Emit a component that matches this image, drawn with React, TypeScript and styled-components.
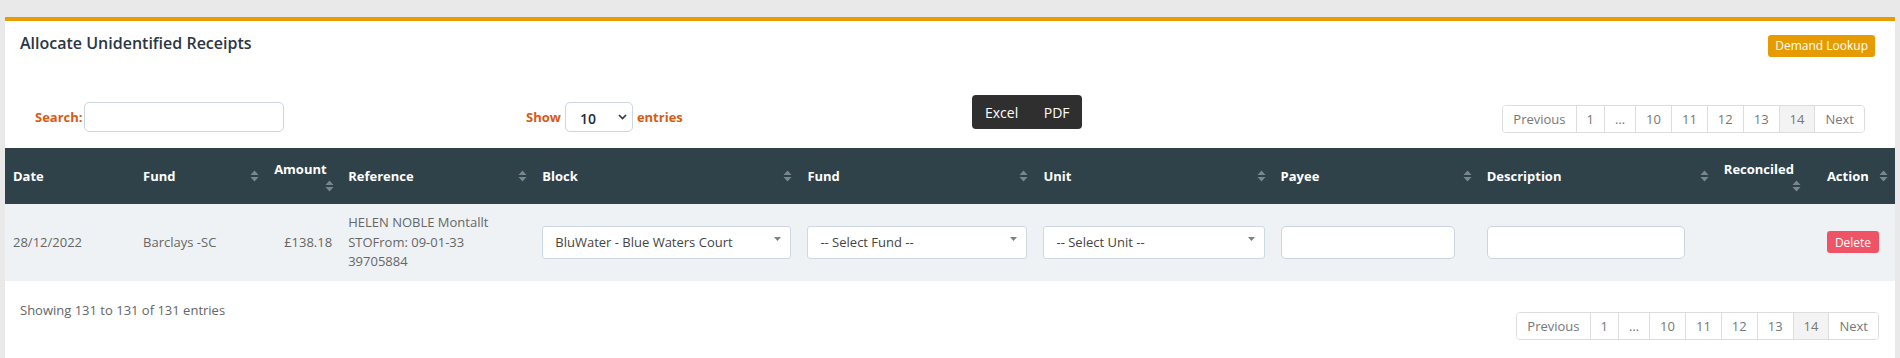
import React from "react";
import styled, { createGlobalStyle } from "styled-components";

const GlobalStyle = createGlobalStyle`
  html, body {
    margin: 0;
    padding: 0;
  }

  body {
    background: #e9e9e9;
    font-family: "Open Sans", "Liberation Sans", Arial, sans-serif;
    color: #666;
  }

  * {
    box-sizing: border-box;
  }
`;

type Column = {
  key: string;
  label: string;
  width: number;
  sortable?: boolean;
  stacked?: boolean;
};

const columns: Column[] = [
  { key: "date", label: "Date", width: 130 },
  { key: "fund", label: "Fund", width: 131, sortable: true },
  { key: "amount", label: "Amount", width: 74, sortable: true, stacked: true },
  { key: "reference", label: "Reference", width: 194, sortable: true },
  { key: "block", label: "Block", width: 265, sortable: true },
  { key: "allocFund", label: "Fund", width: 236, sortable: true },
  { key: "unit", label: "Unit", width: 237, sortable: true },
  { key: "payee", label: "Payee", width: 206, sortable: true },
  { key: "description", label: "Description", width: 237, sortable: true },
  { key: "reconciled", label: "Reconciled", width: 103, sortable: true, stacked: true },
  { key: "action", label: "Action", width: 76, sortable: true },
];

const pages = ["Previous", "1", "…", "10", "11", "12", "13", "14", "Next"];
const referenceLines = ["HELEN NOBLE Montallt", "STOFrom: 09-01-33", "39705884"];

const SortIcon = () => (
  <svg width="9" height="12" viewBox="0 0 9 12">
    <path d="M4.5 0.5 L8.5 5 H0.5 Z M0.5 7 H8.5 L4.5 11.5 Z" fill="#7b878c" />
  </svg>
);

const Pager = ({ top }: { top: number }) => (
  <Pagination $top={top}>
    {pages.map((page) => (
      <PageItem key={page} $active={page === "14"}>
        {page}
      </PageItem>
    ))}
  </Pagination>
);

const Dropdown = ({ value }: { value: string }) => (
  <DropdownWrap>
    <DropdownBox defaultValue={value}>
      <option>{value}</option>
    </DropdownBox>
    <DropdownArrow width="7" height="4" viewBox="0 0 7 4">
      <path d="M0 0 H7 L3.5 4 Z" fill="#808080" />
    </DropdownArrow>
  </DropdownWrap>
);

const App = () => {
  return (
    <>
      <GlobalStyle />
      <Page>
        <Card>
          <TitleRow>
            <Title>Allocate Unidentified Receipts</Title>
            <DemandButton type="button">Demand Lookup</DemandButton>
          </TitleRow>

          <Controls>
            <SearchGroup>
              <ControlLabel>Search:</ControlLabel>
              <SearchInput type="text" />
            </SearchGroup>

            <ShowGroup>
              <ControlLabel>Show</ControlLabel>
              <LengthWrap>
                <LengthSelect defaultValue="10">
                  <option>10</option>
                </LengthSelect>
                <Chevron width="9" height="6" viewBox="0 0 9 6">
                  <path d="M1 1 L4.5 4.5 L8 1" stroke="#2d3744" strokeWidth="1.6" fill="none" />
                </Chevron>
              </LengthWrap>
              <ControlLabel>entries</ControlLabel>
            </ShowGroup>

            <ExportGroup>
              <ExportButton type="button">Excel</ExportButton>
              <ExportButton type="button">PDF</ExportButton>
            </ExportGroup>

            <Pager top={10} />
          </Controls>

          <Table>
            <colgroup>
              {columns.map((col) => (
                <col key={col.key} style={{ width: col.width }} />
              ))}
            </colgroup>
            <thead>
              <tr>
                {columns.map((col) => (
                  <HeadCell key={col.key}>
                    {col.stacked ? (
                      <StackedHead>
                        <span>{col.label}</span>
                        <StackedIcon>
                          <SortIcon />
                        </StackedIcon>
                      </StackedHead>
                    ) : (
                      <HeadInner>
                        <span>{col.label}</span>
                        {col.sortable && <SortIcon />}
                      </HeadInner>
                    )}
                  </HeadCell>
                ))}
              </tr>
            </thead>
            <tbody>
              <tr>
                <Cell>28/12/2022</Cell>
                <Cell>Barclays -SC</Cell>
                <Cell $align="right">£138.18</Cell>
                <Cell>
                  {referenceLines.map((line) => (
                    <div key={line}>{line}</div>
                  ))}
                </Cell>
                <Cell>
                  <Dropdown value="BluWater - Blue Waters Court" />
                </Cell>
                <Cell>
                  <Dropdown value="-- Select Fund --" />
                </Cell>
                <Cell>
                  <Dropdown value="-- Select Unit --" />
                </Cell>
                <Cell>
                  <TextInput type="text" $width={174} />
                </Cell>
                <Cell>
                  <TextInput type="text" $width={198} />
                </Cell>
                <Cell />
                <Cell>
                  <DeleteButton type="button">Delete</DeleteButton>
                </Cell>
              </tr>
            </tbody>
          </Table>

          <Footer>
            <Info>Showing 131 to 131 of 131 entries</Info>
            <Pager top={31} />
          </Footer>
        </Card>
      </Page>
    </>
  );
};

const Page = styled.div`
  padding: 17px 5px 0;
  min-height: 100vh;
`;

const Card = styled.div`
  background: #fff;
  border-top: 4px solid #e89c00;
  min-height: calc(100vh - 17px);
`;

const TitleRow = styled.div`
  display: flex;
  justify-content: space-between;
  align-items: flex-start;
  padding: 11px 20px 0 15px;
`;

const Title = styled.h1`
  margin: 0;
  font-size: 16px;
  line-height: 22px;
  font-weight: 600;
  color: #2b3643;
`;

const DemandButton = styled.button`
  margin-top: 3px;
  height: 22px;
  padding: 0 7px;
  border: none;
  border-radius: 3px;
  background: #e69c00;
  color: #fff;
  font-family: inherit;
  font-size: 12px;
  line-height: 22px;
`;

const Controls = styled.div`
  display: flex;
  align-items: flex-start;
  margin-top: 38px;
  padding: 0 30px;
`;

const SearchGroup = styled.div`
  width: 491px;
  margin-top: 7px;
  display: flex;
  align-items: center;
  gap: 1px;
`;

const ShowGroup = styled.div`
  width: 446px;
  margin-top: 7px;
  display: flex;
  align-items: center;
  gap: 4px;
`;

const ControlLabel = styled.label`
  font-size: 13px;
  font-weight: 700;
  color: #d85a16;
`;

const SearchInput = styled.input`
  width: 200px;
  height: 30px;
  border: 1px solid #ccd6e0;
  border-radius: 5px;
  background: #fff;
  outline: none;
`;

const LengthWrap = styled.div`
  position: relative;
  width: 68px;
  height: 30px;
`;

const LengthSelect = styled.select`
  appearance: none;
  width: 100%;
  height: 100%;
  padding: 3px 0 0 14px;
  border: 1px solid #ccd6e0;
  border-radius: 5px;
  background: #fff;
  font-family: inherit;
  font-size: 14px;
  font-weight: 600;
  color: #222c38;
`;

const Chevron = styled.svg`
  position: absolute;
  top: 12px;
  right: 6px;
  pointer-events: none;
`;

const ExportGroup = styled.div`
  display: flex;
  height: 34px;
  border-radius: 4px;
  overflow: hidden;
  background: #2f2f2f;
`;

const ExportButton = styled.button`
  padding: 0 12.5px 0 13px;
  border: none;
  background: transparent;
  color: #fff;
  font-family: inherit;
  font-size: 14px;
`;

const Pagination = styled.div<{ $top: number }>`
  display: flex;
  margin-left: auto;
  margin-top: ${(p) => p.$top}px;
  height: 28px;
  border: 1px solid #ddd;
  border-radius: 4px;
  overflow: hidden;
`;

const PageItem = styled.span<{ $active?: boolean }>`
  display: flex;
  align-items: center;
  padding: 0 10px;
  font-size: 13px;
  color: #777;
  background: ${(p) => (p.$active ? "#f3f3f3" : "#fff")};

  & + & {
    border-left: 1px solid #ddd;
  }
`;

const Table = styled.table`
  width: 100%;
  margin-top: 15px;
  border-collapse: collapse;
  table-layout: fixed;
`;

const HeadCell = styled.th`
  height: 56px;
  padding: 0 7px 0 8px;
  background: #2f424a;
  color: #fff;
  font-size: 13px;
  font-weight: 700;
  text-align: left;
  vertical-align: middle;
`;

const HeadInner = styled.div`
  display: flex;
  justify-content: space-between;
  align-items: center;
`;

const StackedHead = styled.div`
  display: inline-flex;
  flex-direction: column;
  align-items: flex-end;
  line-height: 18px;
`;

const StackedIcon = styled.span`
  display: flex;
  margin: 2px -7px 0 0;
`;

const Cell = styled.td<{ $align?: "left" | "right" }>`
  padding: 9px 8px;
  background: #eef2f5;
  font-size: 13px;
  line-height: 19.5px;
  color: #666;
  text-align: ${(p) => p.$align || "left"};
  vertical-align: middle;
`;

const DropdownWrap = styled.div`
  position: relative;
  width: 100%;
  height: 33px;
`;

const DropdownBox = styled.select`
  appearance: none;
  width: 100%;
  height: 100%;
  padding: 0 24px 0 12px;
  border: 1px solid #cfd8e0;
  border-radius: 3px;
  background: #fff;
  font-family: inherit;
  font-size: 13px;
  color: #444;
`;

const DropdownArrow = styled.svg`
  position: absolute;
  top: 11px;
  right: 10px;
  pointer-events: none;
`;

const TextInput = styled.input<{ $width: number }>`
  width: ${(p) => p.$width}px;
  height: 33px;
  border: 1px solid #ccd5de;
  border-radius: 5px;
  background: #fff;
  outline: none;
`;

const DeleteButton = styled.button`
  height: 22px;
  padding: 0 8px;
  border: none;
  border-radius: 3px;
  background: #ef5466;
  color: #fff;
  font-family: inherit;
  font-size: 12px;
`;

const Footer = styled.div`
  display: flex;
  align-items: flex-start;
  padding: 0 16px 0 15px;
`;

const Info = styled.div`
  margin-top: 20px;
  font-size: 13px;
  line-height: 18px;
  color: #666;
`;

export default App;
